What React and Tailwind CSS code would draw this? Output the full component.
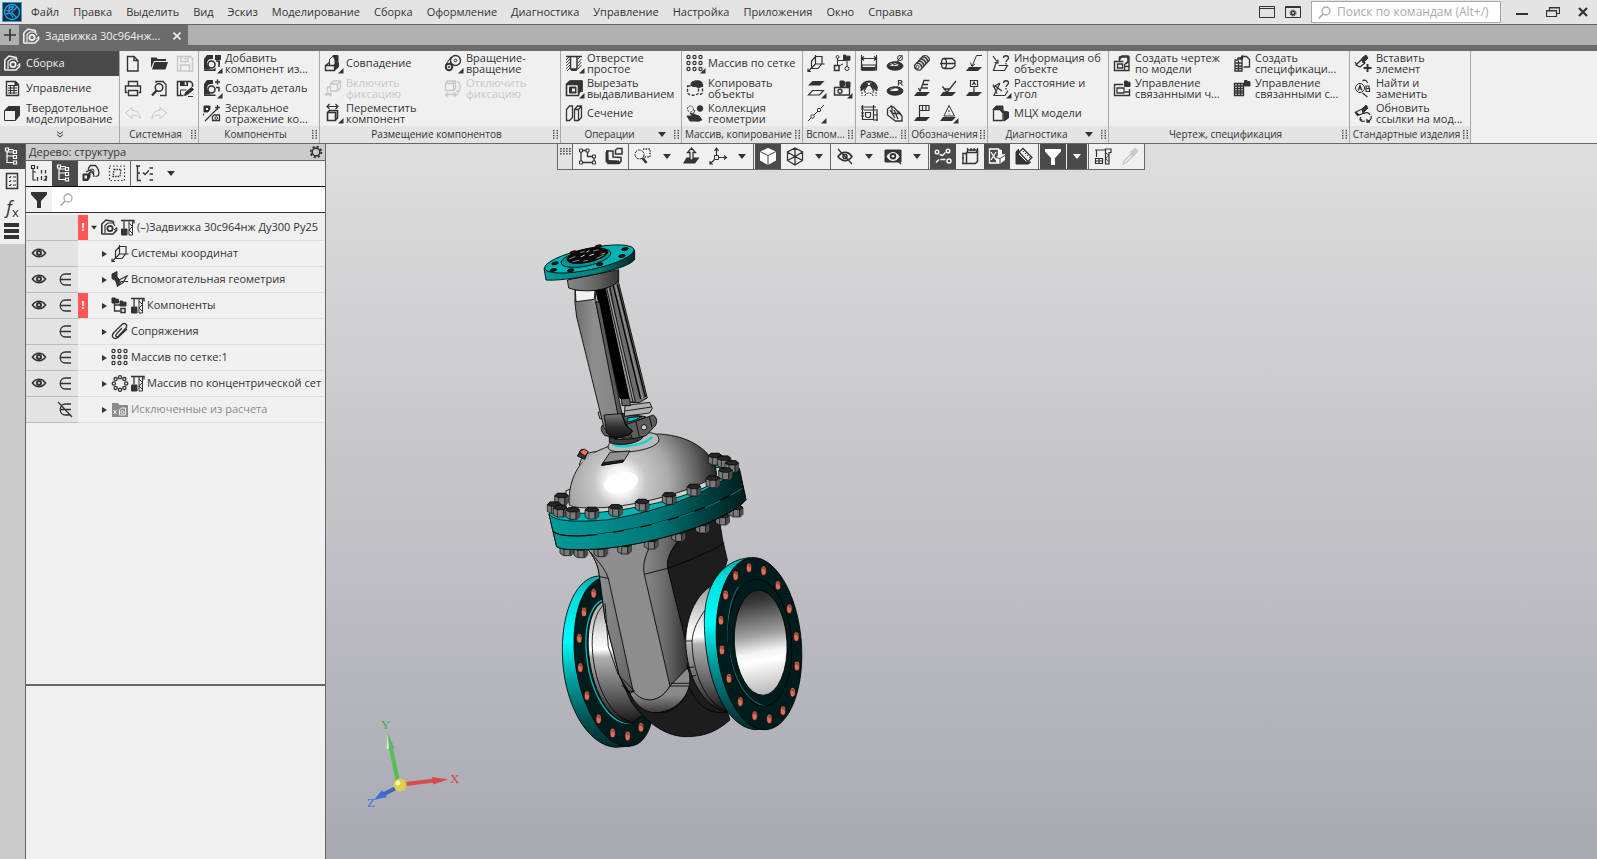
import { useState } from "react";

const K = "currentColor";

// every glyph is drawn on a 26 x 25 cell
const glyphs = {
  assembly: (
    <>
      <path d="M4.8 19V9L9 5l7 1.5 1 2" strokeWidth="1.6" />
      <path d="M8 18V10.5l3-2.500h5l2 3" strokeWidth="1.2" />
      <path d="M4.5 19H16l3.500-3.500v-3" strokeWidth="1.6" />
      <circle cx="13" cy="13.5" r="2.6" strokeWidth="1.8" />
      <path d="M17 15l2.500-2M17 17.500l2.500-2" />
    </>
  ),
  tableDoc: (
    <>
      <path d="M6.5 5.5h9l3 3v11h-12z" strokeWidth="1.4" />
      <path d="M15 5v4h4z" fill={K} />
      <path d="M8 9.5h9M8 12h9M8 14.5h9M8 17h9M10.5 9v9M14 9v9" strokeWidth="1.2" />
    </>
  ),
  solid: (
    <>
      <path d="M4.5 9.5h11v10h-11z" />
      <path d="M4 9.5L8.5 5h11.5v9.5L15.5 20V9.5z" fill={K} stroke="none" />
    </>
  ),
  fileNew: <path d="M7.5 5.5h6.5l4 4v10.500h-10.500zM14 5.5v4h4" strokeWidth="1.4" />,
  open: (
    <g fill={K} stroke="none">
      <path d="M5 17V6.5h5.5l1 1.5H20v2H8z" />
      <path d="M8.5 11H22l-2.500 7.500H6z" />
    </g>
  ),
  save: (
    <>
      <path d="M5.5 5.5h13l2 2v12.500h-15z" strokeWidth="1.5" />
      <path d="M9 5.5v5h7v-5M8.5 20v-6h9v6M13.5 6.5v2.500" strokeWidth="1.5" />
    </>
  ),
  print: (
    <>
      <path d="M8.5 9.5v-4h9v4M7.5 16.5h-2v-6.500h15v6.500h-2" strokeWidth="1.4" />
      <path d="M8.5 14.5h9v5h-9z" strokeWidth="1.4" />
    </>
  ),
  preview: (
    <>
      <path d="M10 7V5.5h7l3 3v11h-6" strokeWidth="1.3" />
      <circle cx="13" cy="11.5" r="3.8" strokeWidth="1.5" />
      <path d="M10.5 14.5L6 19.5" strokeWidth="2.4" />
    </>
  ),
  saveAs: (
    <>
      <path d="M20.5 11V7.5l-2-2h-13v14h6" strokeWidth="1.5" />
      <path d="M8 5h8v5H8z" fill={K} stroke="none" />
      <path d="M13.5 6v3" stroke="#f0f0f0" strokeWidth="1.5" />
      <path d="M8.5 19v-5h6" />
      <path d="M12.5 19.5l1-3 6-5 2 2-6 5zM16 20.5h5" fill={K} />
    </>
  ),
  undo: <path d="M12 6.5L5.5 12l6.5 5.5v-3.500c4 0 6 .5 8 3.500 0-5-3-8-8-8z" />,
  redo: <path d="M14 6.5l6.5 5.5-6.500 5.500v-3.500c-4 0-6 .5-8 3.500 0-5 3-8 8-8z" />,
  addPart: (
    <>
      <path d="M5 18.5V8l3-4h6v4h-2c-3 0-5 3-3 7l3 3.500z" fill={K} stroke="none" />
      <circle cx="12.5" cy="13.5" r="3.5" strokeWidth="1.6" fill="#f0f0f0" />
      <path d="M13 19.5h3.500v-3M16 4h6v5h-6zM18.5 10.5h2.500v4" fill={K} stroke="none" />
      <path d="M5 19.2h11.500M17 10h3v6" strokeWidth="1.5" />
    </>
  ),
  newPart: (
    <>
      <path d="M5 18.5V8l3-4h6v4h-2c-3 0-5 3-3 7l3 3.500z" fill={K} stroke="none" />
      <circle cx="12.5" cy="13.5" r="3.5" strokeWidth="1.6" fill="#f0f0f0" />
      <path d="M18.5 3.5v5M16 6h5M5 19.2h11.500M17 11.5h3v4" strokeWidth="1.5" />
    </>
  ),
  mirror: (
    <>
      <path d="M5 5h6v3l-2 3H5z" fill={K} />
      <path d="M7 7h2v2H7z" fill="#f0f0f0" stroke="none" />
      <path d="M18.5 4v5M16 6.5h5M6 20L18 8" strokeWidth="1.3" />
      <path d="M13.5 19.5v-4l2-1.500h5v5.500z" strokeWidth="1.3" />
      <circle cx="17.3" cy="17" r="1.3" />
      <path d="M4.5 12.5v2" />
    </>
  ),
  match: (
    <>
      <path d="M9.5 14V8.5L13 5h3.500v8" />
      <path d="M13 4.5h5V13l-4 3.500H10l5-3V9z" fill={K} />
      <path d="M5.5 14.5h9v5h-9zM5.5 14.5l4-3" strokeWidth="1.4" fill="#f0f0f0" />
      <path d="M14.5 14.5l4-2.500v4l-4 3.500z" fill={K} />
    </>
  ),
  fixOn: (
    <>
      <path d="M10.5 8h7v7h-7zM10.5 8l3-3h7v7l-3 3M17.5 8l3-3M10 11H7.5v5" strokeWidth="1.3" />
      <path d="M5 18h7M6 20l2-3 3 3" strokeWidth="1.8" />
    </>
  ),
  fixOff: (
    <path d="M5.5 7.5h8v7h-8zM5.5 7.5l2-2.500h8v7.500l-2 2M13.5 7.5l2-2.500M17 5c4 2 4 8 1 12l-1-3M5.5 18.5H17M8 16.5l-2.500 2 2.500 2M14 16.5l2.500 2-2.500 2" strokeWidth="1.3" />
  ),
  move: (
    <>
      <path d="M7 5.5h11M9.5 3L7 5.5 9.5 8M15.5 3L18 5.5 15.5 8" strokeWidth="1.2" />
      <path d="M7.5 11.5h8v8h-8zM7.5 11.5l2-2h8v7.500l-2 2" strokeWidth="1.6" />
    </>
  ),
  rotation: (
    <>
      <circle cx="15.5" cy="9.5" r="5" strokeWidth="1.4" />
      <circle cx="15.5" cy="9.5" r="1.3" />
      <circle cx="9" cy="16" r="3.2" strokeWidth="2" />
      <path d="M11 6l-5.500 8M13 14.5l-2 4" />
      <circle cx="9" cy="16" r=".8" />
    </>
  ),
  hole: (
    <>
      <path d="M5 9l4-4M5 12l4-4M5 15l4-4M5 18l4-4M6 20l3-3M17 8l3-3M17 12l3.500-4M17 15l3.500-4M17 18l3.500-4" strokeWidth=".9" />
      <path d="M9.5 5v13h6.500V5M5 5.5h16" strokeWidth="1.5" />
      <path d="M10.5 18.5h5v1h-5z" fill={K} />
    </>
  ),
  extrudeCut: (
    <>
      <path d="M5.5 8.5h12v11h-12zM5.5 8.5L9 5h12v11" strokeWidth="1.6" />
      <path d="M5 8.5L9 5h12v9l-3.500 4V8.5z" fill={K} />
      <path d="M8.5 11h6.500v6H8.500z" fill={K} />
      <path d="M11 12.5h3v3h-3z" fill="#f0f0f0" stroke="none" />
    </>
  ),
  section: (
    <>
      <path d="M5.5 8.5L8.5 5h3v11.500l-3 3h-3z" strokeWidth="1.3" />
      <path d="M13.5 8.5l3-3.500h4v11.500l-3 3h-4zM13.5 8.5h4v11M17.5 8.5l3-3.500" strokeWidth="1.3" />
    </>
  ),
  grid: (
    <g strokeWidth="1.2">
      {[6.5, 12.5, 18.5].map((x) =>
        [6, 12, 18].map((y) => <circle key={x + "-" + y} cx={x} cy={y} r="1.6" />)
      )}
    </g>
  ),
  copyObj: (
    <>
      <path d="M9 7.5C10 4 19 4 20 6.5v4l-3 1-8-2z" fill={K} />
      <path d="M20.5 8v9l-3 2M5.5 10h11v7c-2 3-9 3-11 0z" strokeDasharray="3 1.500" strokeWidth="1.3" />
    </>
  ),
  collection: (
    <>
      <circle cx="8.5" cy="8" r="3" strokeDasharray="2 1" />
      <circle cx="18" cy="7.5" r="2.8" fill={K} />
      <path d="M5 15h8l5 5H8zM8 12l9 3 3 4-6 1z" fill={K} />
      <path d="M13 9l-2 5M10 17h5" />
    </>
  ),
  axes: <path d="M12.5 4v9h9M12.5 13L5 20.5M5 17.5v3h3M8.5 10l4-4.500h6.500v7l-4 5h-6.500z" strokeWidth="1.2" />,
  nodes: (
    <>
      <path d="M14.5 4h2l1 1.200h3.500v4h-6.500z" fill={K} />
      <path d="M8.5 7v8M8.5 9.5h8M18 9.5v6M10 15l4-2" />
      <circle cx="8.5" cy="6" r="1.5" />
      <path d="M5.5 14.5h4.500v5H5.500z" strokeWidth="1.5" />
      <circle cx="18" cy="17.5" r="2" />
    </>
  ),
  planes: (
    <>
      <path d="M9.5 5h12l-4.500 4.500H5z" fill={K} stroke="none" />
      <path d="M9.5 14.5h11l-4 4.500H5.500z" strokeWidth="1.2" />
    </>
  ),
  camera: (
    <>
      <path d="M5.5 11.5h15V19h-15z" strokeWidth="1.4" />
      <path d="M11 10.5V5h4l1 2-1 3.500zM17 6h4v5h-4z" fill={K} />
      <circle cx="11" cy="15.2" r="2" strokeWidth="1.4" />
    </>
  ),
  line: (
    <>
      <path d="M5 20l3-3M11 14l4-4M17.5 7.5L21 4" />
      <circle cx="9.5" cy="15.5" r="1.7" />
      <circle cx="16" cy="9" r="1.7" />
    </>
  ),
  dimLinear: (
    <>
      <path d="M5.5 4v15h15V4M5.5 7.5h15M8 5.5l-2.500 2 2.500 2M18 5.5l2.500 2-2.500 2" strokeWidth="1.2" />
      <path d="M6 14h14v1.500l-2 3.500H6z" strokeWidth="1.2" />
      <path d="M6 16.5h13v2.500H6z" fill={K} />
    </>
  ),
  dimDia: (
    <>
      <ellipse cx="13" cy="15" rx="8" ry="4.2" fill={K} />
      <ellipse cx="12" cy="13.5" rx="4.5" ry="1.6" fill="#f0f0f0" stroke="none" />
      <path d="M6 14.5L17 10M11 14l7-2" />
      <circle cx="18" cy="7" r="2.5" />
      <path d="M15.5 10l5-6" />
    </>
  ),
  dimAngle: (
    <>
      <path d="M5 12c0-9 16-9 16 0M8 15l5-8 5 8" strokeWidth="1.4" />
      <path d="M5 11l4-5 4 3 4-3 4 5v4l-5-4-3-3-3 3-5 4z" fill={K} />
      <path d="M9 20c0-4 8-4 8 0M6 16v4M20 16v4M9 15v3M17 15v3" strokeDasharray="2 1" />
      <circle cx="13" cy="8" r="1.8" fill="#f0f0f0" />
    </>
  ),
  dimRad: (
    <>
      <ellipse cx="13" cy="15" rx="8" ry="4.2" fill={K} />
      <ellipse cx="12" cy="13.5" rx="4.5" ry="1.6" fill="#f0f0f0" stroke="none" />
      <path d="M6 14.5l10-4" />
      <path d="M16.5 9.5V4.5h2.500l1 1.200-1 1.300h-2M18.5 7l2 2.500" strokeWidth="1.2" />
    </>
  ),
  dimChain: (
    <>
      <path d="M6.5 4v14.500h11M17.5 4v15M21 8v12M5 6h15M8 9h12M17 19h5M17 14h5" strokeWidth="1.2" />
      <path d="M9.5 11.5h5v4c-2 2-5 1-5-1z" strokeWidth="1.2" />
      <path d="M5 8h3M5 12h3M5 15h3" />
    </>
  ),
  dimTrim: <path d="M5.5 8v6l8 6h6.500v-5l-9-9.500M5.5 8L10 4.5M10 4.5v8M8 9l5 8M12 9l4 9M16 10l4 5M10.5 12.5H19" strokeWidth="1.3" />,
  thread: (
    <>
      <path d="M5.5 14.5L14 5c3-1.500 6.500 1 6.500 4L11.5 19c-4 1-6.500-2-6-4.500z" strokeWidth="1.2" />
      <path d="M7.5 12c3 0 5 2 5.500 5M9.5 10c3 0 5 2 5.500 5M11.5 8c3 0 5 2 5.500 5M13.5 6c3 0 5 2 5.500 5" strokeWidth="1.7" />
      <circle cx="8.5" cy="16" r="1.6" />
    </>
  ),
  nut: (
    <>
      <ellipse cx="9" cy="12.5" rx="2.5" ry="5" strokeWidth="1.3" />
      <path d="M9 7.5h8l3 2.500v5l-3 2.500H9M5 12.5h15" strokeWidth="1.3" />
    </>
  ),
  weld: (
    <>
      <path d="M8 16h13l-4 4H5z" fill={K} stroke="none" />
      <path d="M11 15.5l4.500-11H21M9.5 11.5l1.500 4 3-2.500" />
    </>
  ),
  markE: (
    <>
      <path d="M8 16h13l-4 4H5z" fill={K} stroke="none" />
      <path d="M11 15.5l4-11h5.500M14 8.5h5M13 12h6M9.5 12l1.500 3.500" strokeWidth="1.3" />
    </>
  ),
  rough: (
    <>
      <path d="M8 16h13l-4 4H5z" fill={K} stroke="none" />
      <path d="M7.5 10.5l4.500 6L21 5M9 13h6" strokeWidth="1.3" />
    </>
  ),
  datum: (
    <>
      <path d="M8 16h13l-4 4H5z" fill={K} stroke="none" />
      <path d="M9.5 4.5h7v6h-7zM13 10.5V16M11.5 9L13 6l1.500 3" strokeWidth="1.2" />
    </>
  ),
  tolerance: (
    <>
      <path d="M8 16h13l-4 4H5z" fill={K} stroke="none" />
      <path d="M10.5 4.5H20v5h-9.500zM13.5 4.5v5M17 4.5v5M10.5 16V4.500" strokeWidth="1.2" />
    </>
  ),
  warn: (
    <>
      <path d="M8 16h13l-4 4H5z" fill={K} stroke="none" />
      <path d="M14 4.5L9 15h10.500z" fill="#f0f0f0" />
      <path d="M14 9v2M14 12.5v1" />
    </>
  ),
  info: (
    <>
      <path d="M5 5l5 7M10 8.5V12l-3.500-.5M8 12L5.5 19.5h11l3-5h-9" strokeWidth="1.2" />
      <path d="M15.5 7c0-3 5-3 5 0 0 2-2.500 2-2.500 4M18 12v1.500" strokeWidth="1.3" />
    </>
  ),
  distance: (
    <>
      <path d="M5 11l7-4M7 10l7 5M12 7L6 19.5h11l3-5M5 8.5l4 9" strokeWidth="1.2" />
      <path d="M15.5 7c0-3 5-3 5 0 0 2-2.500 2-2.500 4M18 12v1.500" strokeWidth="1.3" />
    </>
  ),
  mass: (
    <>
      <path d="M5.5 8.5h6.500l3 3.500v7.500H5.500z" strokeWidth="1.3" />
      <path d="M5 8.5L8 5h7v5l5.500 1v6L16 20v-8l-3.500-3.500z" fill={K} />
    </>
  ),
  drawing: (
    <>
      <path d="M10.5 10V6h9.500v13.500H5.500v-9h9" strokeWidth="1.4" />
      <path d="M10 9l3-4h6v6l-3 2" strokeWidth="1.6" />
      <path d="M8.5 13h5v4h-5zM15.5 13v6M16 15.5h4" strokeWidth="1.3" />
    </>
  ),
  drawingLink: (
    <>
      <path d="M14 8.5H5.500v11h15V13" strokeWidth="1.4" />
      <path d="M8 12h7v5H8zM16 16h4" strokeWidth="1.3" />
      <path d="M15.5 5h2.500l1 1.200h2v4.300h-5.500z" fill={K} />
    </>
  ),
  spec: (
    <>
      <path d="M12 5.5h5.500l3 3V16h-6M13.5 5l-3 3h3z" strokeWidth="1.3" />
      <path d="M6 20V9h3V7h4v13zM6 12h7M6 15h7M6 17.5h7M9.5 10v10" strokeWidth="1.3" />
    </>
  ),
  specLink: (
    <>
      <path d="M5.5 7.5h9v12h-9zM5.5 10h9M5.5 12.5h9M5.5 15h9M5.5 17h9M8.5 8v11M11.5 8v11" strokeWidth="1.4" />
      <path d="M15.5 4.5h2.500l1 1.200h2V10h-5.500z" fill={K} />
    </>
  ),
  bolt: (
    <>
      <path d="M12 7l4-3 2 3-5 5z" fill={K} />
      <path d="M6 14l6-6 3 4-5 4zM5 11l2 3" strokeWidth="1.3" />
      <path d="M17.5 13v8M13.5 17h8" strokeWidth="2" />
    </>
  ),
  replace: (
    <>
      <circle cx="10" cy="12" r="4.5" />
      <path d="M8 14.5l2-5 2 5M8.7 13h2.600M16 9.5v6M16 10h3v2.500h-3M16 12.5h3.500v3H16M13 4.5c2-1 4 0 4.500 2.500M14 4l-1.500 1M12.5 17l5 4" strokeWidth="1.2" />
    </>
  ),
  update: (
    <>
      <path d="M12 8l4-4 2 3-5 5z" fill={K} />
      <path d="M6 11l6-3 2 4-5 2zM5 11l3 4" strokeWidth="1.3" />
      <path d="M10 18c0 2 3 3 5 2M20 14c-1-3-5-3-6-1M21 15c1 3-1 5-4 5M17 18v3h3M11 16l-1 2 2 1" strokeWidth="1.3" />
    </>
  ),
  sketch: (
    <>
      <path d="M7 6.5v12h13v-6h-6.500v-6z" strokeWidth="1.3" />
      <path d="M5.5 5h3v3h-3zM12 5h3v3h-3zM5.5 17h3v3h-3zM18.5 17h3v3h-3zM18.5 11h3v3h-3z" fill="#f0f0f0" />
    </>
  ),
  sketchOn: (
    <>
      <path d="M6 7h6v6l8 .5v4l-2 2H7z" strokeWidth="1.5" />
      <path d="M5 8l2-2v10.500l11 .5v2.500H7l-2-2z" fill={K} />
      <path d="M14.5 10V6l2-1.500H21V10z" strokeWidth="1.5" />
    </>
  ),
  zoomArea: (
    <>
      <path d="M13 5h7v8h-6" strokeDasharray="1.5 1.2" strokeWidth="1.3" />
      <circle cx="9.5" cy="10.5" r="4.5" strokeDasharray="3 .8" />
      <path d="M12.5 14l4 5" strokeWidth="2.6" />
    </>
  ),
  orient: (
    <>
      <path d="M8.5 13.5h13l-4.500 6H5z" fill={K} stroke="none" />
      <path d="M12 16V8.5H9.5L13.5 4l4 4.500H15V16z" fill="#f0f0f0" strokeWidth="1.3" />
    </>
  ),
  coord: (
    <>
      <path d="M11.5 12V5M13.5 13.5H21M9.5 15.5L5 20M9.5 7l2-3 2 3M19 11.5l2.500 2-2.500 2M5 17v3h3" strokeWidth="1.2" />
      <path d="M9.5 11.5h4v4h-4z" />
    </>
  ),
  cube: (
    <>
      <path d="M13 4l8 3.500v9L13 21l-8-4.500v-9z" fill="#fff" stroke="none" />
      <path d="M5 7.5l8 4 8-4M13 11.5V21" stroke="#4a4a4a" />
    </>
  ),
  cubeWire: <path d="M13 4l7.500 4v8.500L13 21l-7.500-4.500V8zM5.5 8l7.500 4.500L20.5 8M13 12.5V21M13 4v8.500M5.5 16.5l7.500-4 7.500 4" strokeWidth="1.3" />,
  eyeOff: (
    <>
      <path d="M6 12.5c4-5.500 10-5.500 14 0-4 5.500-10 5.500-14 0z" strokeWidth="1.6" />
      <circle cx="13" cy="12.5" r="2" strokeWidth="1.5" />
      <path d="M6 5l14 15" strokeWidth="1.2" />
    </>
  ),
  eyeBox: (
    <>
      <path d="M5 6h16v12H5z" fill={K} />
      <path d="M6.5 12.5c3.500-6 9.500-6 13 0-3.500 6-9.500 6-13 0z" fill="#f0f0f0" stroke="none" />
      <circle cx="13" cy="12.3" r="3.2" fill={K} stroke="none" />
      <circle cx="13" cy="12.3" r="1.3" fill="#f0f0f0" stroke="none" />
      <path d="M17 16l4 4" strokeWidth="1.5" />
    </>
  ),
  constraints: (
    <g strokeWidth="1.4">
      <circle cx="7" cy="8" r="1.8" />
      <path d="M9.5 10.5l3 1 3-3" />
      <circle cx="18" cy="7" r="1.8" />
      <path d="M6 18.5l3-3M10.500 15.5h5" />
      <circle cx="19" cy="17" r="2" />
    </g>
  ),
  notes: (
    <>
      <path d="M9.5 8.5h9l2-1v10l-2 2h-9z" strokeWidth="1.5" />
      <path d="M10 6h11M10.5 4v4M14 4v3M17 4v3M20.5 4v4M6 9v11M5 9.5h4M5 19.5h4M5 14h2" strokeWidth="1.3" />
    </>
  ),
  textured: (
    <>
      <path d="M5.500 5h9v14h-9z" strokeWidth="1.3" />
      <path d="M7 8l5 8M12 8l-5 8" strokeWidth="1.3" />
      <path d="M14 5l4 1v4.500l3-.5v6l-5 4-4-2v-5l2-1z" fill={K} stroke="none" />
      <path d="M12 13.500l4 1 5-3M16 14.500V20" stroke="#4a4a4a" />
    </>
  ),
  ruler: (
    <>
      <path d="M5 8l2.500-3V15l4 3h8l-2 2H5z" fill={K} />
      <path d="M8 8l4-3.500 9 9-4 4z" strokeWidth="1.3" />
      <path d="M8 11l7 7h-7z" fill={K} />
      <path d="M12 8l2-2M14 10l2-2M16 12l2-2M18 14l2-2" />
    </>
  ),
  funnel: <path d="M5 5h16v2.500L15 14v7h-4v-7L5 7.500z" fill={K} stroke="none" />,
  crane: (
    <>
      <path d="M5 6h10M6.5 6v7M5.5 14.5h7v5h-7zM5.5 17h7M9 14.5v5" strokeWidth="1.2" />
      <path d="M15.5 5v15h3.500V8.500h2V5z" strokeWidth="1.2" />
      <path d="M15.5 8.5l3.500 3-3.500 3 3.500 3" />
    </>
  ),
  craneSolid: (
    <>
      <path d="M8 5.5h13v3M11 5.5v8" strokeWidth="1.3" />
      <path d="M16 6v14h3.500V6M16 8l3.500 3.500L16 15l3.500 3.500" />
      <path d="M8.5 14h5.500v6H8.500z" fill={K} />
    </>
  ),
  dropper: (
    <>
      <path d="M6 20l1-3 7-7 2 2-7 7z" strokeWidth="1.3" />
      <path d="M13 8l2-1 3-3 3 3-3 3-1 2z" fill={K} />
    </>
  ),
  tree: (
    <>
      <path d="M8.5 5.5h5M7 7v11.500h7M7 12h7" strokeWidth="1.2" />
      <path d="M5.5 4h3v3h-3zM13.5 6.5h3v3h-3zM13.5 11.5h3v3h-3zM13.5 17h3v3h-3z" strokeWidth="1.2" />
      <path d="M7 8h6" />
    </>
  ),
  props: (
    <>
      <path d="M6.5 4.5h11v15h-11z" strokeWidth="1.5" />
      <path d="M9 8l1 1 1-2M9 12l1 1 1-2M9 16l1 1 1-2M13 8h3M13 12h3M13 16h3" />
    </>
  ),
  menu: <path d="M4 6h15M4 12h15M4 18h15" strokeWidth="4" />,
  treeNum: (
    <>
      <path d="M7 7v12h3M7 11h3M5.5 4.5h3v3h-3z" strokeWidth="1.2" />
      <path d="M11.5 5v3M15.5 9v3.500M19.5 9v3.500M15.5 15v4M18.5 15.5h2v1.500l-2 2h2.500M11.5 16v4" strokeWidth="1.3" />
    </>
  ),
  copyPart: (
    <>
      <path d="M10.5 9V7l2-2.500h5c3 3 4 6 3 10l-3 1" strokeWidth="1.3" />
      <path d="M8 11c5-4 8 0 8 5" strokeWidth="1.3" />
      <circle cx="14" cy="10" r="2" />
      <path d="M5 13h5l2-2v5l-2 3.500H5z" fill={K} />
      <path d="M6.5 14.5h2.500v3H6.500z" fill="#f0f0f0" stroke="none" />
    </>
  ),
  dashed: (
    <>
      <path d="M5.5 5h15v14.500h-15z" strokeDasharray="1.5 2" strokeWidth="1.2" />
      <path d="M10 8.5h7l-1 7H9z" strokeDasharray="1.5 1" strokeWidth="1.3" />
    </>
  ),
  treeCheck: (
    <>
      <path d="M5 5h4M6.5 5v14.500H10M6.5 12H9M12 11.5l2 2 4-4" strokeWidth="1.4" />
      <path d="M18.5 7H22M18.5 13H22M18.5 19H22" strokeWidth="1.4" />
    </>
  ),
  eye: (
    <>
      <path d="M6.5 12c3.500-5 9.500-5 13 0-3.500 5-9.500 5-13 0z" strokeWidth="1.6" />
      <circle cx="13" cy="12" r="2" strokeWidth="2" />
    </>
  ),
  member: <path d="M19 7h-5.500c-7 0-7 11 0 11H19M8.5 12.5H19" strokeWidth="1.3" />,
  memberOff: <path d="M19 7h-5.500c-7 0-7 11 0 11H19M8.5 12.5H19M6 5l14 15" strokeWidth="1.3" />,
  helper: (
    <>
      <path d="M5 7l5-2.500v5.500l3 3-2.500 6.500-2-6-3.500-2z" fill={K} />
      <path d="M10 19.5l4-5h7M12 13l8-4-4 6.500-6 4" strokeWidth="1.2" />
    </>
  ),
  parts: (
    <>
      <path d="M5 5h3l1 1.200h2.500V10H5zM13 8h2.500l1 1.200H19V13h-6z" fill={K} />
      <path d="M7.5 10v8h6M7.5 12h6" strokeWidth="1.3" />
      <path d="M14 15.5h4v4h-4z" strokeWidth="1.5" />
    </>
  ),
  clip: <path d="M15 9l-6 6.500c-1 2 1 3 2.500 1.500L19 9c2-3-1-6-4-3.500L6.5 14c-3 4 1 7 4.500 4.500L20 10" strokeWidth="1.3" />,
  ring: (
    <g strokeWidth="1.3">
      {[0, 1, 2, 3, 4, 5, 6, 7].map((i) => (
        <circle
          key={i}
          cx={13 + 6.2 * Math.cos((i * Math.PI) / 4)}
          cy={12.5 + 6.2 * Math.sin((i * Math.PI) / 4)}
          r="1.6"
        />
      ))}
    </g>
  ),
  excluded: (
    <>
      <path d="M5 6h6l1.500 2H21v12H5z" fill={K} stroke="none" />
      <path d="M6.5 13l3 4M9.5 13l-3 4M12.5 18v-5l2-2h4v7z" stroke="#f0f0f0" />
      <circle cx="15.5" cy="15" r="1.5" stroke="#f0f0f0" />
    </>
  ),
};

function Icon({ name, corner, className = "" }) {
  return (
    <svg
      viewBox="0 0 26 25"
      className={`w-[26px] h-[25px] shrink-0 ${className}`}
      fill="none"
      stroke="currentColor"
      strokeWidth="1"
      aria-hidden="true"
    >
      {glyphs[name]}
      {corner && <path d="M23.5 17v5.500H18z" fill={K} stroke="none" />}
    </svg>
  );
}

function Arrow({ className = "w-2" }) {
  return (
    <svg viewBox="0 0 8 5" className={`h-[5px] shrink-0 ${className}`} fill="currentColor" aria-hidden="true">
      <path d="M0 0h8L4 5z" />
    </svg>
  );
}

function Grip() {
  return (
    <svg viewBox="0 0 5 9" className="w-[5px] h-[9px] mr-0.5 shrink-0" fill="#444" aria-hidden="true">
      {[0, 2.5, 5, 7.5].map((y) => (
        <g key={y}>
          <rect x="0" y={y} width="1.5" height="1.3" />
          <rect x="3.5" y={y} width="1.5" height="1.3" />
        </g>
      ))}
    </svg>
  );
}

const menu = [
  "Файл", "Правка", "Выделить", "Вид", "Эскиз", "Моделирование", "Сборка",
  "Оформление", "Диагностика", "Управление", "Настройка", "Приложения", "Окно", "Справка",
];

// items run down the column first, three to a column
const groups = [
  {
    title: "Системная",
    items: [
      { icon: "fileNew", label: "Новый" },
      { icon: "print", label: "Печать" },
      { icon: "undo", label: "Отменить", off: true },
      { icon: "open", label: "Открыть" },
      { icon: "preview", label: "Просмотр" },
      { icon: "redo", label: "Повторить", off: true },
      { icon: "save", label: "Сохранить", off: true },
      { icon: "saveAs", label: "Сохранить как" },
    ],
  },
  {
    title: "Компоненты",
    items: [
      { icon: "addPart", text: ["Добавить", "компонент из..."], corner: true },
      { icon: "newPart", text: ["Создать деталь"], corner: true },
      { icon: "mirror", text: ["Зеркальное", "отражение ко..."] },
    ],
  },
  {
    title: "Размещение компонентов",
    items: [
      { icon: "match", text: ["Совпадение"], corner: true },
      { icon: "fixOn", text: ["Включить", "фиксацию"], off: true },
      { icon: "move", text: ["Переместить", "компонент"], corner: true },
      { icon: "rotation", text: ["Вращение-", "вращение"], corner: true },
      { icon: "fixOff", text: ["Отключить", "фиксацию"], off: true },
    ],
  },
  {
    title: "Операции",
    more: true,
    items: [
      { icon: "hole", text: ["Отверстие", "простое"], corner: true },
      { icon: "extrudeCut", text: ["Вырезать", "выдавливанием"], corner: true },
      { icon: "section", text: ["Сечение"] },
    ],
  },
  {
    title: "Массив, копирование",
    items: [
      { icon: "grid", text: ["Массив по сетке"], corner: true },
      { icon: "copyObj", text: ["Копировать", "объекты"] },
      { icon: "collection", text: ["Коллекция", "геометрии"] },
    ],
  },
  {
    title: "Вспом...",
    items: [
      { icon: "axes", label: "Система координат" },
      { icon: "planes", label: "Плоскость", corner: true },
      { icon: "line", label: "Ось", corner: true },
      { icon: "nodes", label: "Контрольная точка" },
      { icon: "camera", label: "Компоновка", corner: true },
    ],
  },
  {
    title: "Разме...",
    items: [
      { icon: "dimLinear", label: "Линейный размер" },
      { icon: "dimAngle", label: "Угловой размер" },
      { icon: "dimChain", label: "Авторазмер" },
      { icon: "dimDia", label: "Диаметр" },
      { icon: "dimRad", label: "Радиус" },
      { icon: "dimTrim", label: "Размер ребра" },
    ],
  },
  {
    title: "Обозначения",
    items: [
      { icon: "thread", label: "Резьба" },
      { icon: "markE", label: "Клеймение" },
      { icon: "tolerance", label: "Допуск формы" },
      { icon: "nut", label: "Осевая" },
      { icon: "rough", label: "Шероховатость" },
      { icon: "warn", label: "Позиция", corner: true },
      { icon: "weld", label: "Линия-выноска" },
      { icon: "datum", label: "База" },
    ],
  },
  {
    title: "Диагностика",
    more: true,
    items: [
      { icon: "info", text: ["Информация об", "объекте"] },
      { icon: "distance", text: ["Расстояние и", "угол"], corner: true },
      { icon: "mass", text: ["МЦХ модели"] },
    ],
  },
  {
    title: "Чертеж, спецификация",
    items: [
      { icon: "drawing", text: ["Создать чертеж", "по модели"] },
      { icon: "drawingLink", text: ["Управление", "связанными ч..."] },
      null,
      { icon: "spec", text: ["Создать", "спецификаци..."] },
      { icon: "specLink", text: ["Управление", "связанными с..."] },
    ],
  },
  {
    title: "Стандартные изделия",
    items: [
      { icon: "bolt", text: ["Вставить", "элемент"] },
      { icon: "replace", text: ["Найти и", "заменить"] },
      { icon: "update", text: ["Обновить", "ссылки на мод..."] },
    ],
  },
];

function Lines({ text }) {
  return (
    <span className="pb-0.5">
      {text.map((t) => (
        <span key={t} className="block">
          {t}
        </span>
      ))}
    </span>
  );
}

function RibbonButton({ item }) {
  if (!item) return <span />;
  return (
    <button
      aria-label={item.label}
      disabled={item.off}
      className={`flex items-center h-[25px] text-left whitespace-nowrap leading-[11px] ${
        item.text ? "w-[120px]" : "w-[26px]"
      } ${item.off ? "text-[#c8c8c8]" : ""}`}
    >
      <Icon name={item.icon} corner={item.corner} />
      {item.text && <Lines text={item.text} />}
    </button>
  );
}

function RibbonGroup({ group }) {
  return (
    <div className="flex flex-col shrink-0 border-r border-[#a8a8a8]">
      <div className="grid grid-rows-3 grid-flow-col h-[75px] justify-start">
        {group.items.map((item, i) => (
          <RibbonButton key={i} item={item} />
        ))}
      </div>
      <div className="flex items-center w-0 min-w-full h-[17px] bg-[#e4e4e4] text-[10px] leading-[17px]">
        <span className="flex-1 text-center whitespace-nowrap">{group.title}</span>
        {group.more && <Arrow className="w-2 mr-2" />}
        <Grip />
      </div>
    </div>
  );
}

const modes = [
  { icon: "assembly", text: ["Сборка"] },
  { icon: "tableDoc", text: ["Управление"] },
  { icon: "solid", text: ["Твердотельное", "моделирование"] },
];

function Ribbon() {
  const [mode, setMode] = useState(0);

  return (
    <div className="flex bg-[#f0f0f0] border-t-[6px] border-t-[#6b6b6b] border-b border-b-[#666] shrink-0 overflow-hidden">
      <div className="w-[120px] shrink-0 border-r border-[#a8a8a8]">
        {modes.map((m, i) => (
          <button
            key={m.icon}
            onClick={() => setMode(i)}
            className={`flex items-center w-full h-[25px] text-left leading-[11px] ${
              mode === i ? "bg-[#4a4a4a] text-[#f0f0f0]" : ""
            }`}
          >
            <Icon name={m.icon} />
            <Lines text={m.text} />
          </button>
        ))}
        <button aria-label="Ещё" className="flex items-center justify-center w-full h-[17px] bg-[#e4e4e4]">
          <svg viewBox="0 0 8 7" className="w-2 h-[7px]" fill="none" stroke="currentColor">
            <path d="M1 .5l3 2.500 3-2.500M1 3.5L4 6l3-2.500" />
          </svg>
        </button>
      </div>
      {groups.map((g) => (
        <RibbonGroup key={g.title} group={g} />
      ))}
    </div>
  );
}

const rows = [
  { name: "Системы координат", icons: ["axes"], eye: true },
  { name: "Вспомогательная геометрия", icons: ["helper"], eye: true, member: "member" },
  { name: "Компоненты", icons: ["parts", "craneSolid"], eye: true, member: "member", alert: true },
  { name: "Сопряжения", icons: ["clip"], member: "member" },
  { name: "Массив по сетке:1", icons: ["grid"], eye: true, member: "member" },
  { name: "Массив по концентрической сет", icons: ["ring", "craneSolid"], eye: true, member: "member" },
  { name: "Исключенные из расчета", icons: ["excluded"], member: "memberOff", muted: true },
];

function TreeRow({ row }) {
  return (
    <li className="flex h-[26px] whitespace-nowrap">
      <span className="w-[26px] bg-[#e3e3e3] border-b border-[#bcbcbc] shrink-0">{row.eye && <Icon name="eye" />}</span>
      <span className="w-[26px] bg-[#e3e3e3] border-b border-[#bcbcbc] shrink-0">
        {row.member && <Icon name={row.member} />}
      </span>
      <span className="flex flex-1 items-center border-b border-[#dedede] overflow-hidden">
        <span className="w-2.5 h-full shrink-0">
          {row.alert && (
            <span className="flex h-full items-center justify-center bg-[#ff5555] text-white font-bold">!</span>
          )}
        </span>
        <span className={`flex items-center ${row.root ? "pl-[3px]" : "pl-3.5"}`}>
          {row.root ? (
            <Arrow className="w-1.5" />
          ) : (
            <svg viewBox="0 0 5 6" className="w-[5px] h-1.5 shrink-0" fill="currentColor" aria-hidden="true">
              <path d="M0 0l5 3-5 3z" />
            </svg>
          )}
          {row.icons.map((n, i) => (
            <Icon key={n} name={n} className={`${i > 0 ? "-ml-2.5" : ""} ${row.muted ? "text-[#8a8a8a]" : ""}`} />
          ))}
          <span className={`-ml-0.5 ${row.muted ? "text-[#8a8a8a]" : ""}`}>{row.name}</span>
        </span>
      </span>
    </li>
  );
}

function TreePanel() {
  const [query, setQuery] = useState("");

  return (
    <section className="flex flex-col w-[301px] shrink-0 border-x border-[#666] bg-[#f0f0f0]">
      <header className="flex items-center justify-between h-[17px] pl-[3px] pr-0.5 bg-[#cbcbcb] border-b border-[#666] leading-4">
        <h2>Дерево: структура</h2>
        <button aria-label="Настройка панели">
          <Gear className="w-3.5 h-3.5" />
        </button>
      </header>
      <div className="flex h-[26px] border-b border-black">
        <button aria-label="Структура"><Icon name="treeNum" /></button>
        <button aria-label="Дерево" className="bg-[#4a4a4a] text-white"><Icon name="tree" /></button>
        <button aria-label="Состав"><Icon name="copyPart" /></button>
        <button aria-label="Область" className="border-r border-[#666]"><Icon name="dashed" /></button>
        <button aria-label="Отображение" className="flex items-center">
          <Icon name="treeCheck" />
          <Arrow className="w-2 ml-2.5" />
        </button>
      </div>
      <div className="flex h-[26px] border-b border-[#333]">
        <button aria-label="Фильтр"><Icon name="funnel" /></button>
        <label className="flex flex-1 items-center pl-2 bg-white">
          <Magnifier />
          <input
            aria-label="Поиск в дереве"
            value={query}
            onChange={(e) => setQuery(e.target.value)}
            className="flex-1 min-w-0 outline-none"
          />
        </label>
      </div>
      <ul className="pt-0.5 h-[473px] border-b-2 border-[#666]">
        <TreeRow
          row={{ name: "(–)Задвижка 30с964нж Ду300 Ру25", icons: ["assembly", "craneSolid"], alert: true, root: true }}
        />
        {rows.map((r) => (
          <TreeRow key={r.name} row={r} />
        ))}
      </ul>
    </section>
  );
}

function Magnifier() {
  return (
    <svg viewBox="0 0 13 13" className="w-[13px] h-[13px] shrink-0" fill="none" stroke="#aaa" strokeWidth="1.3" aria-hidden="true">
      <circle cx="8" cy="5" r="4" />
      <path d="M5 8L.8 12.5" strokeWidth="1.7" />
    </svg>
  );
}

function Gear({ className }) {
  return (
    <svg viewBox="0 0 14 14" className={className} fill="none" stroke="currentColor" aria-hidden="true">
      <circle cx="7" cy="7" r="3.9" strokeWidth="1.6" />
      <circle cx="7" cy="7" r="5.4" strokeWidth="1.8" strokeDasharray="2.1 2.14" />
    </svg>
  );
}

const viewTools = [
  [{ icon: "sketch" }, { icon: "sketchOn" }],
  [{ icon: "zoomArea" }, { arrow: true }, { icon: "orient" }, { icon: "coord" }, { arrow: true }],
  [{ icon: "cube", on: true }, { icon: "cubeWire" }, { arrow: true }],
  [{ icon: "eyeOff" }, { arrow: true }, { icon: "eyeBox" }, { arrow: true }],
  [{ icon: "constraints", on: true }, { icon: "notes" }, { icon: "textured", on: true }, { icon: "ruler" }],
  [{ icon: "funnel", on: true }, { arrow: true, on: true }],
  [{ icon: "crane" }, { icon: "dropper", off: true }],
];

function ViewToolbar() {
  return (
    <div className="absolute left-[231px] top-0 flex h-[26px] bg-[#f0f0f0] border-x border-b border-[#666]">
      <div className="w-3.5 bg-[#e4e4e4] pt-1 pl-0.5">
        <svg viewBox="0 0 11 7" className="w-[11px] h-[7px]" fill="#555" aria-hidden="true">
          {[0, 3, 6, 9].map((x) => (
            <path key={x} d={`M${x} 0h1.7v1.5h-1.7zM${x} 2.5h1.7V4h-1.7zM${x} 5h1.7v1.5h-1.7z`} />
          ))}
        </svg>
      </div>
      {viewTools.map((set, i) => (
        <div key={i} className="flex gap-px px-px border-l border-[#666]">
          {set.map((t, j) => (
            <button
              key={j}
              aria-label={t.icon || "Список"}
              disabled={t.off}
              className={`flex items-center justify-center ${t.arrow ? "w-5" : "w-[26px]"} ${
                t.on ? "bg-[#4a4a4a] text-white" : ""
              } ${t.off ? "text-[#c8c8c8]" : ""}`}
            >
              {t.arrow ? <Arrow /> : <Icon name={t.icon} />}
            </button>
          ))}
        </div>
      ))}
    </div>
  );
}

const topNuts = [
  [525, 118], [552, 126], [575, 140], [556, 162], [518, 186], [461, 211], [387, 236],
  [306, 256], [226, 272], [64, 238], [42, 264], [60, 274], [155, 280], [98, 281],
];
const lowNuts = [
  [80, 390], [122, 396], [182, 393], [253, 385], [333, 370], [415, 347], [487, 322], [547, 298], [588, 274],
];
const rightHoles = [
  [597, 83], [641, 92], [684, 136], [718, 206], [739, 290], [741, 378], [728, 457], [699, 512],
  [658, 537], [614, 527], [571, 485], [537, 415], [516, 330], [513, 241], [527, 165], [557, 107],
];
const leftHoles = [
  [131, 160], [102, 216], [88, 295], [91, 383], [111, 467], [146, 537], [188, 579], [233, 588], [273, 562],
];

function Nut({ x, y }) {
  return (
    <g transform={`translate(${x} ${y})`} stroke="#000" strokeWidth="2">
      <path d="M-20-10l8-8h24l9 7v20l-8 8h-22l-11-7z" fill="#7a7a7a" />
      <path d="M9-4l12-6v19l-8 8h-4z" fill="#4d4d4d" stroke="none" />
      <path d="M-20-10l8-8h24l9 7-9 6h-21z" fill="#262626" />
      <path d="M-8-4v20M10-4v20" />
    </g>
  );
}

function Hole({ x, y }) {
  return (
    <g>
      <ellipse cx={x} cy={y} rx="8" ry="14" fill="#d9705a" stroke="#2a0d08" strokeWidth="2" />
      <path d={`M${x - 7} ${y - 5}q7-12 13-2v8q-6-8-13-6z`} fill="#9c4a39" stroke="none" />
    </g>
  );
}

function Valve() {
  return (
    <svg
      viewBox="530 235 290 530"
      className="absolute left-[204px] top-[91px] w-[290px] h-[530px]"
      role="img"
      aria-label="Модель задвижки"
    >
      <defs>
        <linearGradient id="rim" x1="0" y1="0" x2="0" y2="1">
          <stop offset="0" stopColor="#00a8a8" />
          <stop offset=".12" stopColor="#00dede" />
          <stop offset=".38" stopColor="#00fbfb" />
          <stop offset=".6" stopColor="#00a0a0" />
          <stop offset=".85" stopColor="#005050" />
          <stop offset="1" stopColor="#002a2a" />
        </linearGradient>
        <linearGradient id="flange" x1="0" y1="0" x2="1" y2="0">
          <stop offset="0" stopColor="#009a9a" />
          <stop offset=".25" stopColor="#008c8c" />
          <stop offset=".55" stopColor="#007676" />
          <stop offset=".8" stopColor="#004040" />
          <stop offset="1" stopColor="#001c1c" />
        </linearGradient>
        <linearGradient id="top" x1="0" y1="0" x2="1" y2="0">
          <stop offset="0" stopColor="#009c9c" />
          <stop offset=".6" stopColor="#008080" />
          <stop offset=".85" stopColor="#004444" />
          <stop offset="1" stopColor="#002a2a" />
        </linearGradient>
        <linearGradient id="bore" x1="0" y1="0" x2=".06" y2="1">
          <stop offset="0" stopColor="#262020" />
          <stop offset=".14" stopColor="#3a3a3a" />
          <stop offset=".45" stopColor="#a0a0a0" />
          <stop offset=".62" stopColor="#f4f4f4" />
          <stop offset=".7" stopColor="#ffffff" />
          <stop offset="1" stopColor="#bdbdbd" />
        </linearGradient>
        <linearGradient id="neck" x1="0" y1="0" x2="0" y2="1">
          <stop offset="0" stopColor="#9a9a9a" />
          <stop offset=".28" stopColor="#e8e8e8" />
          <stop offset=".4" stopColor="#ffffff" />
          <stop offset=".46" stopColor="#b0b0b0" />
          <stop offset=".8" stopColor="#555" />
          <stop offset="1" stopColor="#151515" />
        </linearGradient>
        <radialGradient id="dome" gradientUnits="userSpaceOnUse" cx="240" cy="185" r="300">
          <stop offset="0" stopColor="#fff" />
          <stop offset=".14" stopColor="#f4f4f4" />
          <stop offset=".26" stopColor="#c6c6c6" />
          <stop offset=".5" stopColor="#a8a8a8" />
          <stop offset=".78" stopColor="#606060" />
          <stop offset="1" stopColor="#1c1c1c" />
        </radialGradient>
        <linearGradient id="side" x1="0" y1="0" x2="1" y2="0">
          <stop offset="0" stopColor="#888" />
          <stop offset=".5" stopColor="#6a6a6a" />
          <stop offset="1" stopColor="#333" />
        </linearGradient>
        <linearGradient id="column" x1="0" y1="0" x2="1" y2="0">
          <stop offset="0" stopColor="#6e6e6e" />
          <stop offset=".35" stopColor="#8e8e8e" />
          <stop offset="1" stopColor="#7e7e7e" />
        </linearGradient>
        <linearGradient id="heel" x1="0" y1="0" x2="0" y2="1">
          <stop offset="0" stopColor="#7a7a7a" />
          <stop offset=".5" stopColor="#333" />
          <stop offset="1" stopColor="#111" />
        </linearGradient>
        <linearGradient id="bend" x1="0" y1="0" x2="1" y2="1">
          <stop offset="0" stopColor="#999" />
          <stop offset=".5" stopColor="#777" />
          <stop offset="1" stopColor="#151515" />
        </linearGradient>
        <linearGradient id="lip" x1="0" y1="0" x2="0" y2="1">
          <stop offset="0" stopColor="#8c8c8c" />
          <stop offset=".6" stopColor="#8a8a8a" />
          <stop offset="1" stopColor="#3a3a3a" />
        </linearGradient>
      </defs>

      {/* body and pipe flanges */}
      <g transform="translate(550 540) scale(.3333)" stroke="#000" strokeWidth="2.5">
        <path d="M145 108C80 112 37 210 37 330c0 160 75 290 163 292l40-4 20-500z" fill="url(#rim)" />
        <path d="M148 116C95 140 70 220 72 320c4 150 80 302 165 299 35-2 55-30 66-68L250 180z" fill="#001c1c" />
        <path d="M160 180C125 190 105 250 108 320c6 130 65 235 135 230" fill="none" stroke="#00b8b8" strokeWidth="4" />
        <path d="M165 182C130 195 112 250 115 322c6 125 65 232 130 228l40-30-60-330z" fill="url(#neck)" />
        <path d="M168 190C140 205 124 260 127 325c6 115 55 205 118 222" fill="none" />
        <path d="M115 30c25 30 32 60 34 85l16 120 44 175 36 78c50 65 105 102 165 102 60 0 95-20 130-50l-60-200 20-170 32-110-14-60-13-80L280-10z" fill="#1d1d1d" />
        <path d="M115 30c25 30 32 60 34 85l16 120 44 175 36 58c40 65 120 65 155 10 15-25 18-60 10-110L353 85c-5-30 10-60 50-110l-110 10z" fill="url(#bend)" />
        <path d="M115 20c25 40 35 60 60 95l75 340c30 35 80 35 110-20L283 103c-5-30-2-55 18-98z" fill="#8d8d8d" stroke="none" />
        <path d="M310-5c-20 35-32 75-27 108l77 335c20-8 40-30 50-60 4-20 2-50-5-80L353 85c-5-30 10-60 50-110z" fill="url(#side)" stroke="none" />
        <path d="M310 0c-22 40-34 70-27 103l77 335M175 115l75 340M283 103l70-18 54 218M353 85c60-22 130-50 170-75M353 85c-5-30 10-60 50-100M120 35c25 30 45 50 55 80l-27-5" fill="none" />
        <path d="M250 455c30 35 80 35 110-17l50-52c8 0 12 30 8 50-10 45-50 82-105 82-30 0-65-30-75-65z" fill="url(#lip)" />
        <path d="M360 438h57M363 430h54M209 408l44 45M215 435l25 25 15-8M165 190l10 130 30 85" fill="none" />
        <path d="M480 140c-45 30-72 95-73 165 3 105 50 195 125 212z" fill="url(#neck)" />
        <path d="M470 205c-25 30-42 65-44 100 2 100 45 190 105 208M407 303h20M412 383l20-2M420 410l18-4M420 445c20 50 60 80 110 72" fill="none" />

        <path d="M600 53C510 60 465 140 463 240c0 170 60 320 152 329l40-3-45-505z" fill="url(#rim)" />
        <ellipse cx="627" cy="311" rx="127" ry="259" transform="rotate(-5 627 311)" fill="#001c1c" />
        <path d="M566 140c-25 35-35 90-32 160 8 100 50 185 110 198" fill="none" stroke="#007c7c" strokeWidth="3" />
        <ellipse cx="630" cy="308" rx="95" ry="191" transform="rotate(-4 630 308)" fill="none" />
        <ellipse cx="632" cy="308" rx="79" ry="158" transform="rotate(-3 632 308)" fill="url(#bore)" />
        {leftHoles.map(([x, y]) => (
          <Hole key={x} x={x} y={y} />
        ))}
        {rightHoles.map(([x, y]) => (
          <Hole key={x} x={x} y={y} />
        ))}
      </g>

      {/* bonnet */}
      <g transform="translate(540 420) scale(.3333)" stroke="#000" strokeWidth="2.5">
        {lowNuts.map(([x, y]) => (
          <Nut key={x} x={x} y={y} />
        ))}
        <path d="M27 283C40 230 560 100 598 146l20 93c-60 70-310 145-470 149-50 2-85 1-98-8z" fill="#00b4b4" />
        <path d="M27 283c20 25 100 22 173 17 150-25 300-75 398-154l20 93c-60 70-310 145-470 149-50 2-85 1-98-8z" fill="url(#flange)" />
        <path d="M40 335c20 16 80 14 130 9 160-20 330-70 436-140" fill="none" strokeWidth="4" />
        <path d="M170 345c160-20 330-70 436-140" fill="none" stroke="#00c8c8" strokeWidth="2" strokeDasharray="50 34" />
        <path d="M78 262v-50l30-10 430-60 10 30c-80 60-300 110-450 108z" fill="#d0d0d0" />
        <path d="M88 255c-5-60 20-130 80-160 60-25 110-52 190-53 100 5 170 60 172 123-60 45-240 95-350 98-50 2-82 0-92-8z" fill="url(#dome)" />
        <ellipse cx="243" cy="188" rx="52" ry="31" transform="rotate(-15 243 188)" fill="#fff" stroke="none" />
        <path d="M205 85c10 22 145 10 152-25 0-20-20-24-45-20l-90 22c-12 5-20 12-17 23z" fill="#bbb" />
        <path d="M218 72c20 14 100 5 118-22" fill="none" stroke="#00d8d8" strokeWidth="7" />
        <path d="M210 97l60-4-20 32-66 11z" fill="#909090" />
        <path d="M190 128l60-8-2 7-62 9z" fill="#222" />
        <path d="M118 135c5-25 20-38 50-40" fill="#aaa" />
        <path d="M112 108l12-20 20 8-10 22z" fill="#333" />
        <path d="M118 95l14-8 13 8-10 14z" fill="#ee7052" />
        {topNuts.map(([x, y]) => (
          <Nut key={x} x={x} y={y} />
        ))}
      </g>

      {/* yoke and actuator flange */}
      <g transform="translate(530 235) scale(.3333)" stroke="#000" strokeWidth="2.5">
        <path d="M235 605l60 5 42-15 10-50-70-10z" fill="#555" />
        <path d="M238 606c30 14 85 8 100-14v16c-20 22-80 26-100 14z" fill="#3a3a3a" />
        <path d="M216 572l20-8 14 42-25-4c-10-8-14-20-9-30zM290 568l80-28c15 10 12 30 0 38l-22 24-40 10z" fill="#5c5c5c" />
        <path d="M204 532l20-6 4 22-18 4zM285 512l74-10 8 18-8 14-76 10z" fill="#b0b0b0" />
        <path d="M285 528l80-12" fill="none" />
        <path d="M290 562c20-4 35-10 45-18l-40 4z" fill="#00c8c8" />
        <circle cx="342" cy="577" r="8" fill="#ccc" />
        <path d="M318 560l10 44M358 546l8 30" fill="none" />
        <path d="M238 145l27-6 87 350-24 14h-24z" fill="#6d6d6d" />
        <path d="M250 152l82 340M262 148l84 338" fill="none" strokeWidth="4" />
        <path d="M256 150l82 340" fill="none" stroke="#999" strokeWidth="3" />
        <path d="M222 155l14-4 80 350h-16z" fill="#9a9a9a" />
        <path d="M229 155l80 346" fill="none" />
        <path d="M195 155h30l72 335-18 8-10-10z" fill="#000" />
        <path d="M274 492l25-2 2 22h-25z" fill="#666" />
        <path d="M135 160h60l3 45 77 335 25 50-40 20-26-16-12-16-82-332-5-41z" fill="url(#column)" />
        <path d="M197 200l12 2 65 325 14 45 20 16-12 14-26-4-6-58z" fill="#5a5a5a" />
        <path d="M222 540l52-4 14 36 18 14-10 14-40 12-26-18z" fill="url(#heel)" />
        <path d="M136 165h59l-2 28-55 7z" fill="#f2f2f2" />
        <path d="M112 135l4 24c40 16 120 10 150-20v-35z" fill="url(#side)" />
        <path d="M42 100l6 35c50 6 250-30 266-62V45z" fill="url(#top)" />
        <ellipse cx="178" cy="72" rx="137" ry="32" transform="rotate(-12 178 72)" fill="#00b2b2" />
        <ellipse cx="168" cy="69" rx="76" ry="24" transform="rotate(-12 168 69)" fill="#009494" />
        <ellipse cx="172" cy="62" rx="62" ry="20" transform="rotate(-12 172 62)" fill="#0a0a0a" />
        <g fill="none" stroke="#8a8a8a" strokeWidth="3">
          <path d="M118 72l18-8M128 80l20-4M150 52l14-2M190 48l16-4M200 70l22-10M212 58l14-4M160 78l14-2" />
          <path d="M152 66l12-6M178 62l14-5M170 52l8-6" stroke="#d8d8d8" />
        </g>
        {[[75, 85], [70, 105], [122, 106], [209, 88], [276, 63], [285, 42], [205, 34], [130, 52]].map(([x, y]) => (
          <ellipse key={x} cx={x} cy={y} rx="10" ry="4" transform={`rotate(-12 ${x} ${y})`} fill="#2b1410" />
        ))}
      </g>
    </svg>
  );
}

function Triad() {
  return (
    <svg
      viewBox="360 710 110 110"
      className="absolute left-[34px] bottom-[39px] w-[110px] h-[110px] font-['Liberation_Serif',serif]"
      aria-hidden="true"
    >
      <path d="M398 782l-7-34" stroke="#53c053" strokeWidth="4" />
      <path d="M387.5 732l7 16-8 2z" fill="#63b468" />
      <path d="M387.5 732l1.500 17-2.500.5z" fill="#d5ecd5" />
      <path d="M402 784.5l32-4" stroke="#d94c50" strokeWidth="4" />
      <path d="M448 779.5l-15 5-1-7.500z" fill="#d9484c" />
      <path d="M398 787l-16 8" stroke="#3d66b8" strokeWidth="4" />
      <path d="M374 800l8-10 5 7z" fill="#3a6fdc" />
      <circle cx="400" cy="785" r="6.5" fill="#dccf4c" />
      <circle cx="398" cy="783" r="2.5" fill="#fbf6a8" />
      <text x="381" y="729" fontSize="13" fill="#3fae4f">Y</text>
      <text x="450" y="783" fontSize="13" fill="#e0393f">X</text>
      <text x="367" y="807" fontSize="13" fill="#3b6fdb">Z</text>
    </svg>
  );
}

export default function App() {
  const [command, setCommand] = useState("");

  return (
    <div className="flex flex-col h-screen overflow-hidden bg-[#f0f0f0] text-[#333] text-[11px] font-['Open_Sans','Noto_Sans',sans-serif]">
      {/* MENU */}
      <div className="flex items-center h-[25px] pl-0.5 bg-[#e4e4e4] border-b border-[#666] shrink-0">
        <svg viewBox="0 0 20 20" className="w-5 h-5 mr-0.5 shrink-0" fill="none" stroke="#1ea5e8" aria-hidden="true">
          <rect x=".5" y=".5" width="19" height="19" fill="#1d2a33" />
          <circle cx="10" cy="10" r="7.5" strokeWidth="1.3" />
          <path d="M7 5v4M7 5h3v3M15 5l-5.500 5.500 5 5M12 4.5L7 9.5l-3-1M4 12l4-1 3 4.500" strokeWidth="1.3" />
        </svg>
        <nav className="flex">
          {menu.map((m) => (
            <button key={m} className="px-[7px] whitespace-nowrap">
              {m}
            </button>
          ))}
        </nav>
        <div className="flex items-center ml-auto">
          <button aria-label="Окно" className="mr-2.5">
            <svg viewBox="0 0 16 12" className="w-4 h-3" fill="none" stroke="currentColor">
              <path d="M.5.5h15v11H.5zM.5 2.5h15" />
            </svg>
          </button>
          <button aria-label="Настройка окна" className="mr-2.5">
            <svg viewBox="0 0 16 12" className="w-4 h-3" fill="none" stroke="currentColor">
              <path d="M.5.5h15v11H.5zM.5 1.5h15" />
              <circle cx="8" cy="7" r="1.8" strokeWidth="1.5" />
              <circle cx="8" cy="7" r="3" strokeDasharray="1.3 1.05" />
            </svg>
          </button>
          <label className="flex items-center w-[190px] h-[22px] pl-1.5 gap-1.5 bg-white border border-[#a8a8a8] text-[12px]">
            <Magnifier />
            <input
              aria-label="Поиск по командам"
              value={command}
              onChange={(e) => setCommand(e.target.value)}
              placeholder="Поиск по командам (Alt+/)"
              className="flex-1 min-w-0 outline-none placeholder:text-[#aaa]"
            />
          </label>
          <button aria-label="Свернуть" className="ml-[15px]">
            <svg viewBox="0 0 12 12" className="w-3 h-3" stroke="currentColor" strokeWidth="2">
              <path d="M0 8h12" />
            </svg>
          </button>
          <button aria-label="Развернуть" className="ml-[18px]">
            <svg viewBox="0 0 14 12" className="w-3.5 h-3" fill="none" stroke="currentColor">
              <path d="M.5 4.5h10v6H.5zM.5 5h10M3.5 4V1.500h10v6H11M3.5 2h10" strokeWidth="1.2" />
            </svg>
          </button>
          <button aria-label="Закрыть" className="ml-[18px] mr-[9px]">
            <svg viewBox="0 0 10 10" className="w-2.5 h-2.5" stroke="currentColor" strokeWidth="2.2">
              <path d="M1 1l8 8M9 1L1 9" />
            </svg>
          </button>
        </div>
      </div>

      {/* TABS */}
      <div className="flex h-5 bg-[#b0b0b0] shrink-0">
        <button aria-label="Новая вкладка" className="flex items-center justify-center w-[19px]">
          <svg viewBox="0 0 12 12" className="w-3 h-3" stroke="currentColor" strokeWidth="1.7">
            <path d="M6 0v12M0 6h12" />
          </svg>
        </button>
        <div className="flex items-center w-[169px] pt-0.5 bg-[#6b6b6b] text-[#f0f0f0]">
          <Icon name="assembly" />
          <span>Задвижка 30с964нж...</span>
          <button aria-label="Закрыть вкладку" className="ml-auto mr-[7px]">
            <svg viewBox="0 0 8 8" className="w-2 h-2" stroke="currentColor" strokeWidth="1.6">
              <path d="M.5.5l7 7M7.5.5l-7 7" />
            </svg>
          </button>
        </div>
      </div>

      <Ribbon />

      <div className="flex flex-1 min-h-0">
        {/* SIDE TABS */}
        <div className="w-[25px] shrink-0 bg-[#cbcbcb]">
          <button aria-label="Дерево" className="block w-full h-[25px] bg-[#4a4a4a] text-white"><Icon name="tree" /></button>
          <button aria-label="Параметры" className="block w-full h-[25px] bg-[#f0f0f0]"><Icon name="props" /></button>
          <button className="block w-full h-[25px] bg-[#f0f0f0] text-[18px] leading-5 italic">
            f<sub className="text-[13px] not-italic">x</sub>
          </button>
          <button aria-label="Список" className="block w-full h-[25px] bg-[#f0f0f0]"><Icon name="menu" /></button>
        </div>

        <TreePanel />

        {/* MODEL VIEW */}
        <main className="relative flex-1 overflow-hidden bg-linear-to-b from-[#dedede] to-[#a9a9b2]">
          <ViewToolbar />
          <Valve />
          <Triad />
        </main>
      </div>
    </div>
  );
}
